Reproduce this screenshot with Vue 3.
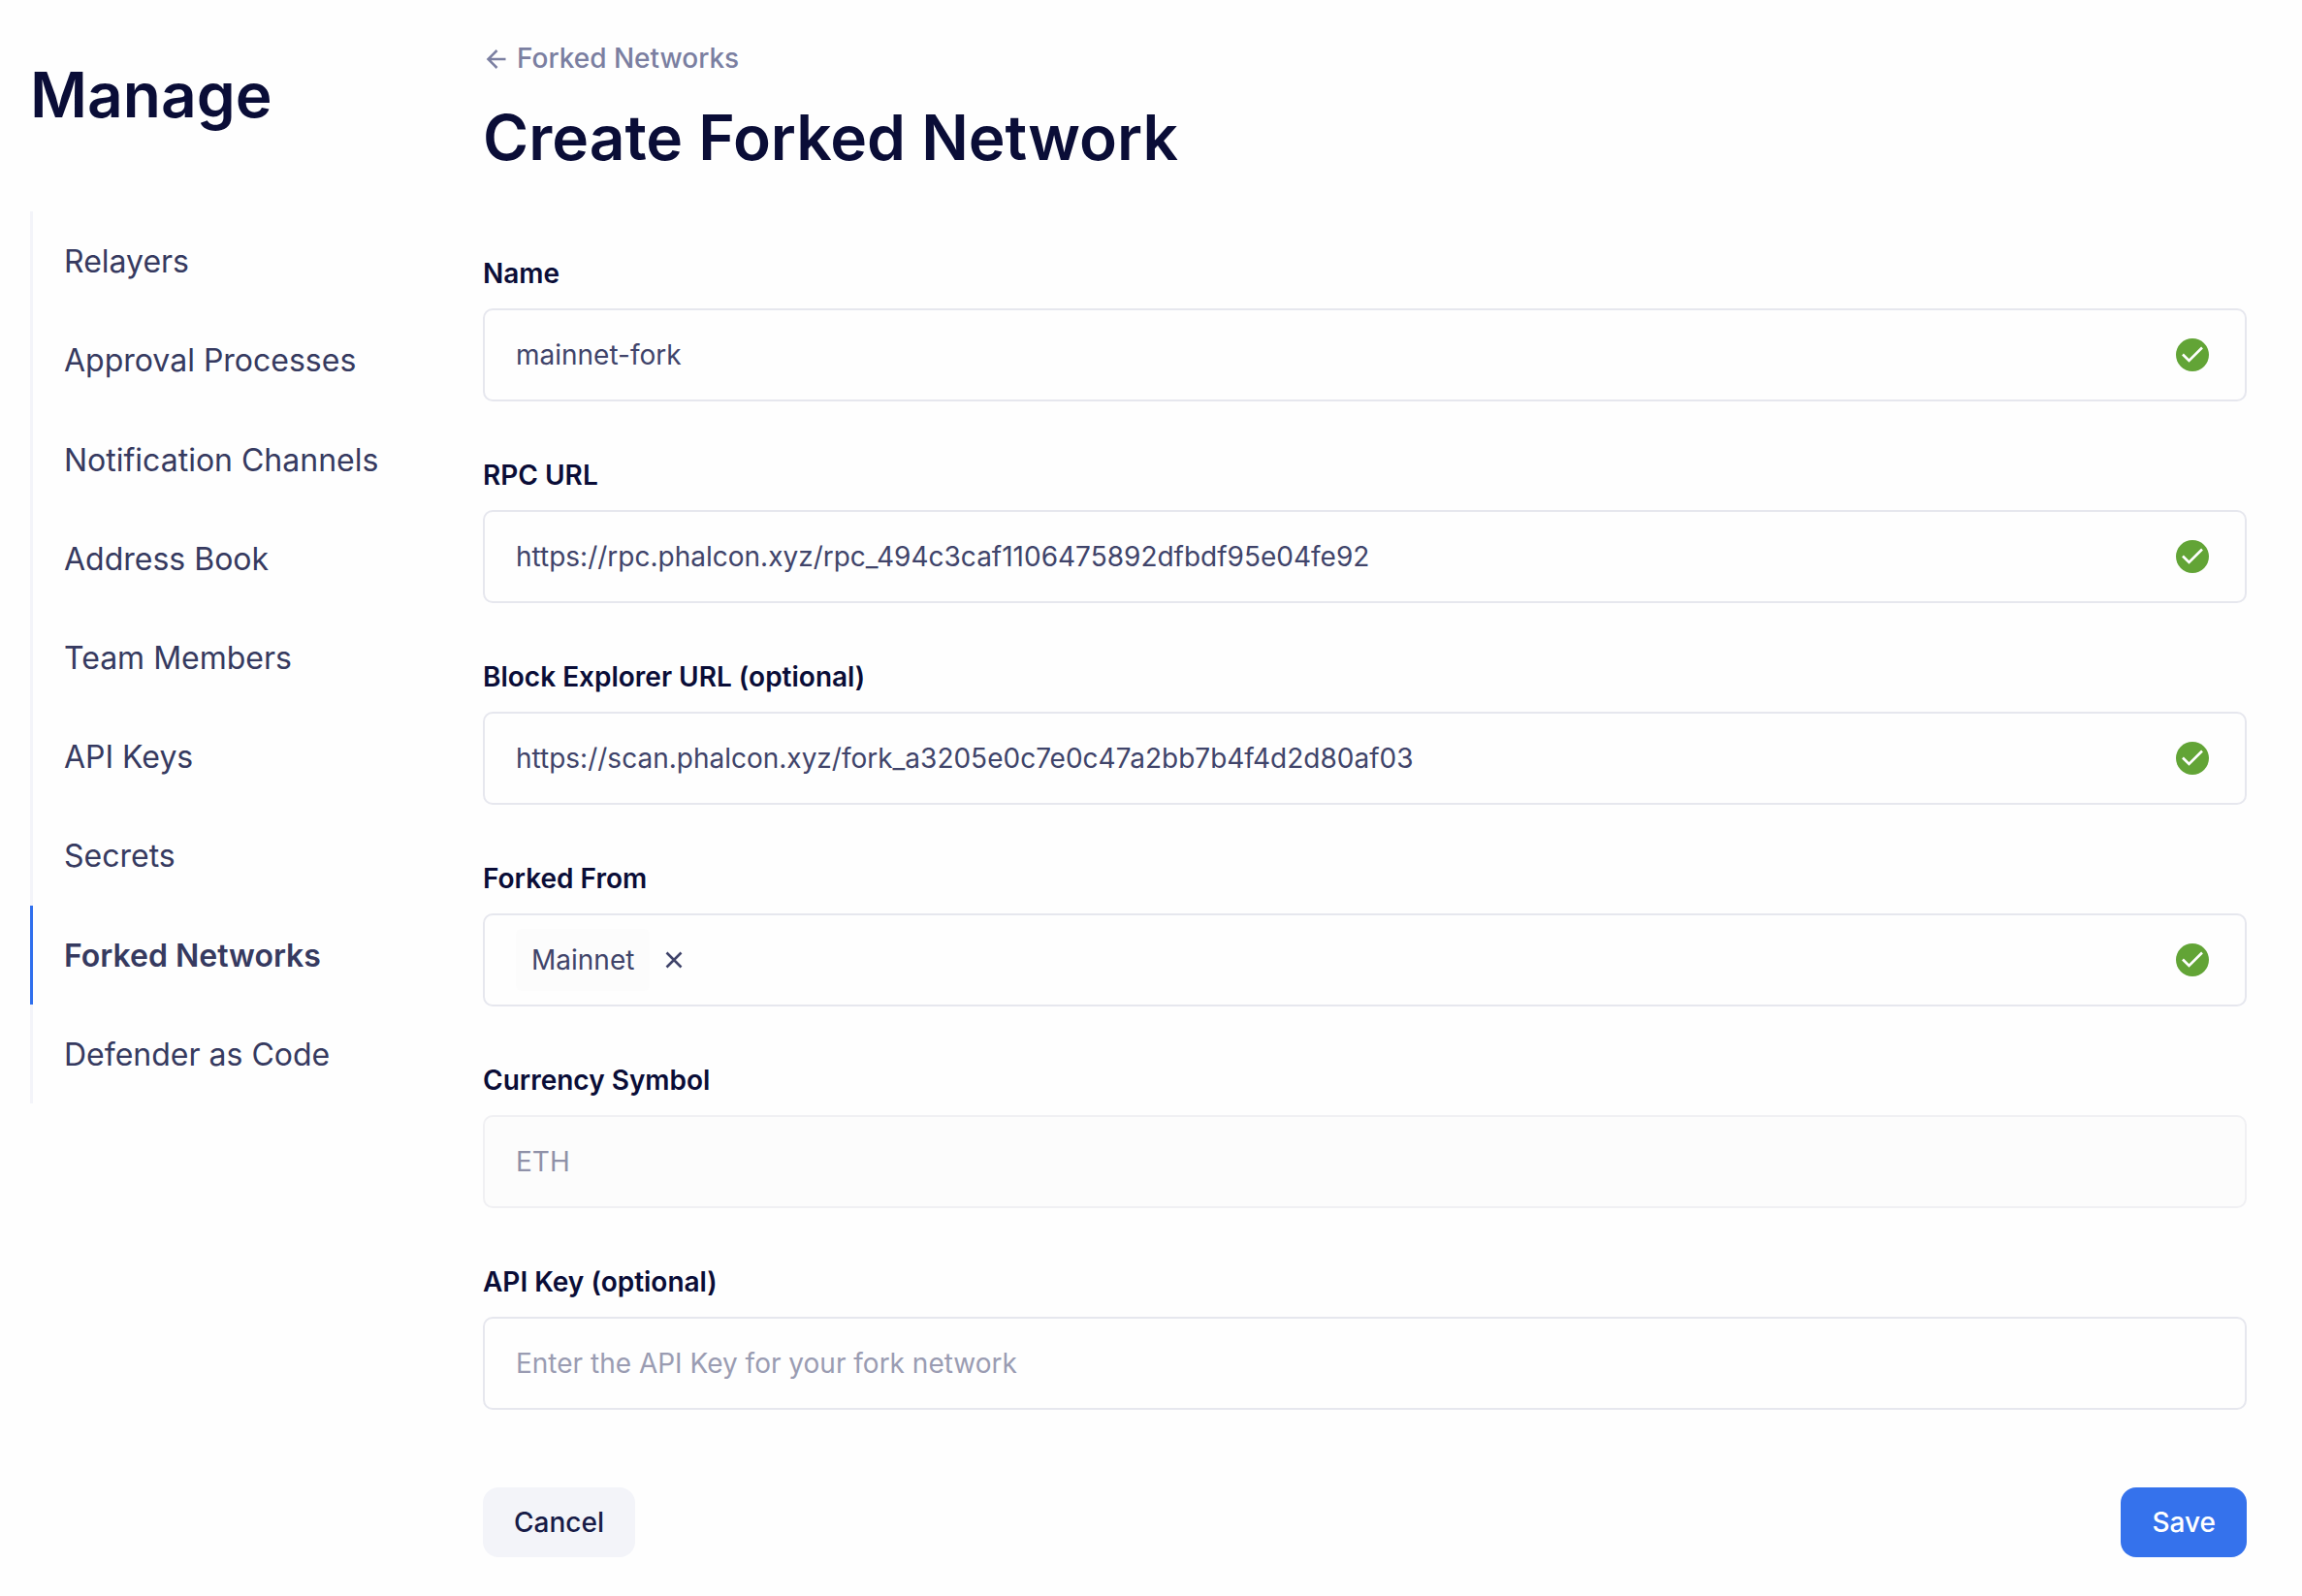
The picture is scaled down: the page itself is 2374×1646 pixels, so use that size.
<script setup>
import { reactive, ref } from 'vue'

const navItems = [
  'Relayers',
  'Approval Processes',
  'Notification Channels',
  'Address Book',
  'Team Members',
  'API Keys',
  'Secrets',
  'Forked Networks',
  'Defender as Code',
]
const active = 'Forked Networks'

const textFields = reactive([
  { id: 'name', label: 'Name', value: 'mainnet-fork' },
  { id: 'rpc-url', label: 'RPC URL', value: 'https://rpc.phalcon.xyz/rpc_494c3caf1106475892dfbdf95e04fe92' },
  { id: 'explorer-url', label: 'Block Explorer URL (optional)', value: 'https://scan.phalcon.xyz/fork_a3205e0c7e0c47a2bb7b4f4d2d80af03' },
])
const network = ref('Mainnet')
const apiKey = ref('')
</script>

<template>
  <div class="page">
    <aside class="sidebar">
      <h2 class="title">Manage</h2>
      <nav>
        <ul class="nav">
          <li v-for="item in navItems" :key="item" class="nav-item" :class="{ active: item === active }">
            <a href="#">{{ item }}</a>
          </li>
        </ul>
      </nav>
    </aside>

    <main class="content">
      <a class="back" href="#">
        <svg class="back-icon" width="20" height="20" viewBox="0 0 20 20" aria-hidden="true">
          <path d="M19.5 11H2M10.5 2L1.5 11L10.5 20" />
        </svg>
        Forked Networks
      </a>
      <h1 class="title">Create Forked Network</h1>

      <form class="form" @submit.prevent>
        <div v-for="field in textFields" :key="field.id" class="field">
          <label :for="field.id">{{ field.label }}</label>
          <div class="control">
            <input :id="field.id" v-model="field.value" type="text" spellcheck="false" />
            <svg class="check" viewBox="0 0 34 34" aria-hidden="true">
              <circle cx="17" cy="17" r="17" />
              <path d="M7 16.5L13.5 23L27 9.5" />
            </svg>
          </div>
        </div>

        <div class="field">
          <label for="forked-from">Forked From</label>
          <div class="control">
            <span v-if="network" class="tag">{{ network }}</span>
            <button v-if="network" class="remove" type="button" aria-label="Remove network" @click="network = ''">
              <svg width="18" height="18" viewBox="0 0 18 18" aria-hidden="true">
                <path d="M1.5 1.5L16.5 16.5M16.5 1.5L1.5 16.5" />
              </svg>
            </button>
            <input id="forked-from" type="text" />
            <svg class="check" viewBox="0 0 34 34" aria-hidden="true">
              <circle cx="17" cy="17" r="17" />
              <path d="M7 16.5L13.5 23L27 9.5" />
            </svg>
          </div>
        </div>

        <div class="field">
          <label for="currency">Currency Symbol</label>
          <div class="control disabled">
            <input id="currency" type="text" value="ETH" disabled />
          </div>
        </div>

        <div class="field">
          <label for="api-key">API Key (optional)</label>
          <div class="control">
            <input id="api-key" v-model="apiKey" type="text" placeholder="Enter the API Key for your fork network" />
          </div>
        </div>

        <div class="actions">
          <button class="button secondary" type="button">Cancel</button>
          <button class="button primary" type="submit">Save</button>
        </div>
      </form>
    </main>
  </div>
</template>

<style>
body {
  background: #fefefe;
}
</style>

<style scoped>
.page {
  display: flex;
  padding: 40px 57px 40px 31px;
  font-family: Inter, sans-serif;
  font-size: 28px;
  line-height: 40px;
  color: #40446a;
}

.sidebar {
  flex: none;
  width: 467px;
  padding-top: 18px;
  box-sizing: border-box;
}

.title {
  margin: 0;
  font-size: 64px;
  line-height: 80px;
  font-weight: 600;
  color: #0a0d37;
}

.nav {
  display: flex;
  flex-direction: column;
  min-height: 920px;
  margin: 80px 0 0;
  padding: 0;
  list-style: none;
}

.nav-item {
  flex: 1;
  display: flex;
  align-items: center;
  padding: 2px 0 0 32px;
  border-left: 3px solid #f3f4f9;
  font-size: 32px;
}

.nav-item a {
  color: #363a60;
  text-decoration: none;
}

.nav-item.active {
  border-left-color: #2f6fed;
  font-weight: 600;
}

.content {
  flex: 1;
  min-width: 0;
}

.back {
  display: flex;
  align-items: center;
  gap: 11px;
  margin-bottom: 22px;
  padding-left: 4px;
  color: #7b7fa1;
  font-weight: 500;
  text-decoration: none;
}

.back-icon {
  overflow: visible;
}

.back-icon path {
  fill: none;
  stroke: currentColor;
  stroke-width: 2.6;
}

.form {
  display: flex;
  flex-direction: column;
  gap: 56px;
  margin-top: 80px;
}

.field {
  display: flex;
  flex-direction: column;
  gap: 16px;
}

.field label {
  color: #0a0d37;
  font-weight: 600;
}

.control {
  display: flex;
  align-items: center;
  height: 96px;
  box-sizing: border-box;
  padding: 0 37px 0 32px;
  border: 2px solid #e6e7ee;
  border-radius: 10px;
}

.control input {
  flex: 1;
  min-width: 0;
  padding: 0;
  border: 0;
  outline: 0;
  background: transparent;
  color: inherit;
  font: inherit;
}

.control input::placeholder {
  color: #9a9cb2;
  opacity: 1;
}

.control.disabled {
  border-color: #f0f0f3;
  background: #fcfcfc;
}

.control.disabled input {
  color: #8f91a8;
}

.check {
  flex: none;
  width: 34px;
  height: 34px;
}

.check circle {
  fill: #62a436;
}

.check path {
  fill: none;
  stroke: #fff;
  stroke-width: 2.6;
}

.tag {
  padding: 12px 16px;
  border-radius: 6px;
  background: #fcfcfc;
}

.remove {
  display: flex;
  margin: 0 16px;
  padding: 0;
  border: 0;
  background: none;
  color: #40446a;
  cursor: pointer;
}

.remove path {
  fill: none;
  stroke: currentColor;
  stroke-width: 2.6;
}

.actions {
  display: flex;
  justify-content: space-between;
  margin-top: 24px;
}

.button {
  padding: 16px 32px;
  border: 0;
  border-radius: 16px;
  font: inherit;
  font-weight: 500;
  cursor: pointer;
}

.secondary {
  background: #f3f4f9;
  color: #171b47;
}

.primary {
  background: #3572ec;
  color: #fff;
}
</style>
